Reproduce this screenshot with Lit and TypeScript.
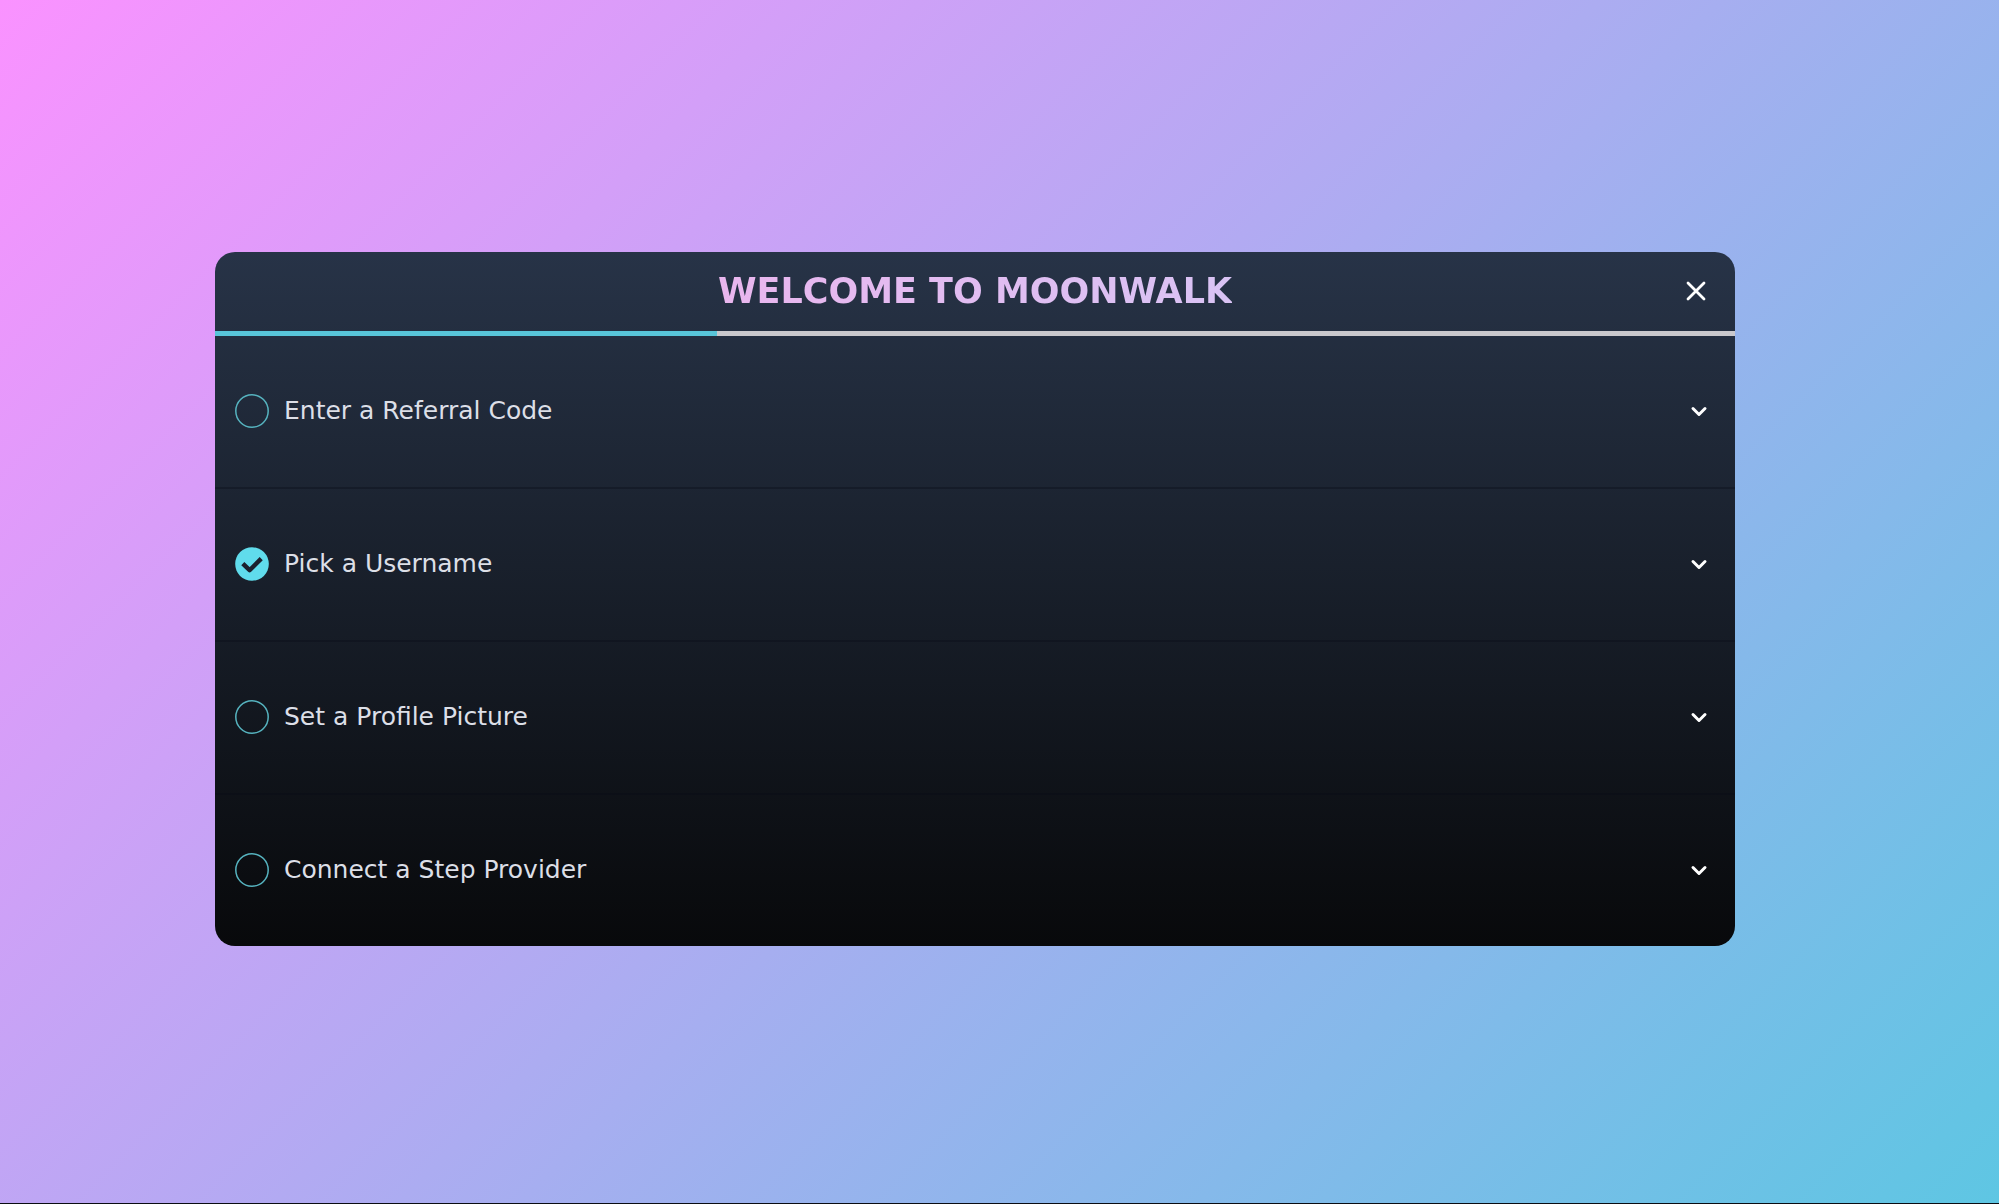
import { LitElement, html, css, svg } from "lit";
import { customElement, state } from "lit/decorators.js";

interface Step {
  label: string;
  done: boolean;
}

@customElement("app-root")
export class AppRoot extends LitElement {
  @state() private progress = 33;

  @state() private steps: Step[] = [
    { label: "Enter a Referral Code", done: false },
    { label: "Pick a Username", done: true },
    { label: "Set a Profile Picture", done: false },
    { label: "Connect a Step Provider", done: false },
  ];

  static styles = css`
    * {
      box-sizing: border-box;
    }
    :host {
      display: flex;
      flex-direction: column;
      justify-content: center;
      min-height: 100vh;
      padding: 0 264px 6px 215px;
      border-bottom: 1px solid #0a0c12;
      box-sizing: border-box;
      background: linear-gradient(135deg, #fa92ff, #5ec6e3);
      font-family: "DejaVu Sans", sans-serif;
      color: #dcdfe7;
    }
    .card {
      border-radius: 20px;
      overflow: hidden;
      background: linear-gradient(180deg, #273347, #08090b);
    }
    .header {
      display: grid;
      grid-template-columns: 1fr auto 1fr;
      align-items: center;
      height: 79px;
      padding: 0 25px;
    }
    .title {
      grid-column: 2;
      margin: 0;
      font-size: 35px;
      line-height: 40px;
      font-weight: 700;
      white-space: nowrap;
      color: transparent;
      background: linear-gradient(90deg, #e9b6ee, #d9c3f4);
      background-clip: text;
      -webkit-background-clip: text;
    }
    .close,
    .step {
      border: 0;
      background: none;
      color: inherit;
      font: inherit;
      cursor: pointer;
    }
    .close {
      justify-self: end;
      display: flex;
      padding: 0;
    }
    .track {
      height: 5px;
      background: #c9c8cc;
    }
    .bar {
      height: 100%;
      background: #58c5d9;
    }
    .steps {
      margin: 0;
      padding: 0;
      list-style: none;
    }
    .item + .item {
      border-top: 2px solid rgba(10, 12, 22, 0.35);
    }
    .step {
      display: flex;
      align-items: center;
      gap: 15px;
      width: 100%;
      height: 151px;
      padding: 0 24px 0 20px;
      text-align: left;
    }
    .label {
      flex: 1;
      font-size: 25px;
      line-height: 32px;
      font-weight: 400;
    }
    .icon {
      display: block;
      flex: none;
    }
  `;

  private mark(done: boolean) {
    return html`<svg class="icon" width="34" height="34" viewBox="0 0 34 34" aria-hidden="true">
      ${done
        ? svg`<circle cx="17" cy="17" r="16.8" fill="#60dcec" />
            <path d="M7.8 16.6 L14.6 23.2 L26.2 11.6" fill="none" stroke="#1b212e" stroke-width="4.4" stroke-linejoin="round" />`
        : svg`<circle cx="17" cy="17" r="16.2" fill="none" stroke="#56b3bf" stroke-width="1.5" />`}
    </svg>`;
  }

  render() {
    return html`
      <section class="card" aria-labelledby="title">
        <header class="header">
          <h1 class="title" id="title">WELCOME TO MOONWALK</h1>
          <button class="close" type="button" aria-label="Close">
            <svg class="icon" width="28" height="28" viewBox="0 0 28 28" aria-hidden="true">
              <path d="M6 6 L22 22 M22 6 L6 22" fill="none" stroke="#fff" stroke-width="2.8" stroke-linecap="round" />
            </svg>
          </button>
        </header>
        <div
          class="track"
          role="progressbar"
          aria-labelledby="title"
          aria-valuenow=${this.progress}
          aria-valuemin="0"
          aria-valuemax="100"
        >
          <div class="bar" style="width: ${this.progress}%"></div>
        </div>
        <ul class="steps">
          ${this.steps.map(
            (step) => html`<li class="item">
              <button class="step" type="button" aria-expanded="false">
                ${this.mark(step.done)}
                <span class="label">${step.label}</span>
                <svg class="icon" width="24" height="24" viewBox="0 0 24 24" aria-hidden="true">
                  <path
                    d="M6 9.5 L12 15.5 L18 9.5"
                    fill="none"
                    stroke="#fff"
                    stroke-width="3"
                    stroke-linecap="round"
                    stroke-linejoin="round"
                  />
                </svg>
              </button>
            </li>`
          )}
        </ul>
      </section>
    `;
  }
}
